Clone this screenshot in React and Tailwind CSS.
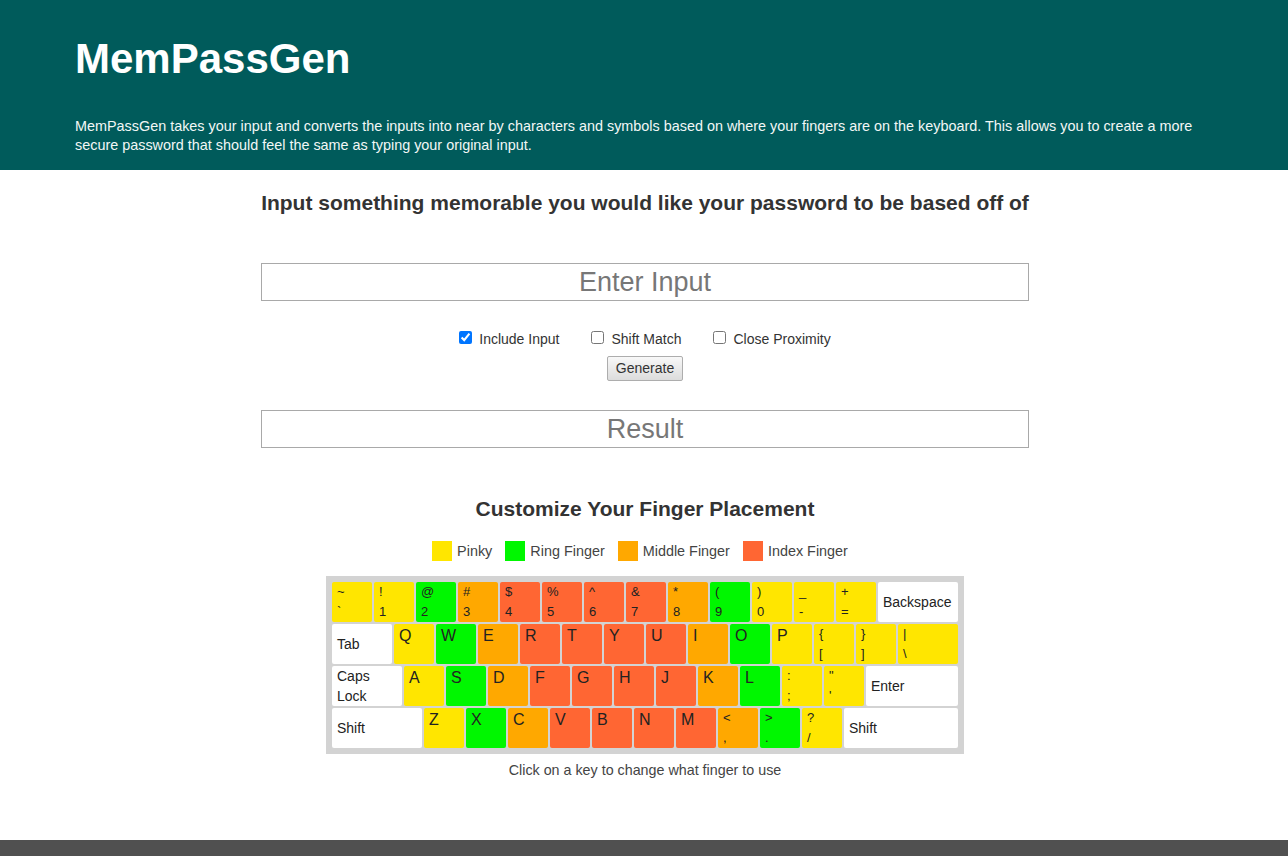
const Y = 'bg-[#ffe600]';
const G = 'bg-[#00f700]';
const O = 'bg-[#ffa800]';
const R = 'bg-[#ff6633]';
const W = 'bg-white';

const rows = [
  [
    { t: '~', b: '`', c: Y }, { t: '!', b: '1', c: Y }, { t: '@', b: '2', c: G }, { t: '#', b: '3', c: O },
    { t: '$', b: '4', c: R }, { t: '%', b: '5', c: R }, { t: '^', b: '6', c: R }, { t: '&', b: '7', c: R },
    { t: '*', b: '8', c: O }, { t: '(', b: '9', c: G }, { t: ')', b: '0', c: Y }, { t: '_', b: '-', c: Y },
    { t: '+', b: '=', c: Y }, { s: 'Backspace', w: 'w-[80px]', c: W },
  ],
  [
    { s: 'Tab', w: 'w-[60px]', c: W }, { l: 'Q', c: Y }, { l: 'W', c: G }, { l: 'E', c: O }, { l: 'R', c: R },
    { l: 'T', c: R }, { l: 'Y', c: R }, { l: 'U', c: R }, { l: 'I', c: O }, { l: 'O', c: G }, { l: 'P', c: Y },
    { t: '{', b: '[', c: Y }, { t: '}', b: ']', c: Y }, { t: '|', b: '\\', c: Y, w: 'w-[60px]' },
  ],
  [
    { s: 'Caps Lock', w: 'w-[70px]', c: W, two: true }, { l: 'A', c: Y }, { l: 'S', c: G }, { l: 'D', c: O },
    { l: 'F', c: R }, { l: 'G', c: R }, { l: 'H', c: R }, { l: 'J', c: R }, { l: 'K', c: O }, { l: 'L', c: G },
    { t: ':', b: ';', c: Y }, { t: '"', b: "'", c: Y }, { s: 'Enter', w: 'w-[92px]', c: W },
  ],
  [
    { s: 'Shift', w: 'w-[90px]', c: W }, { l: 'Z', c: Y }, { l: 'X', c: G }, { l: 'C', c: O }, { l: 'V', c: R },
    { l: 'B', c: R }, { l: 'N', c: R }, { l: 'M', c: R }, { t: '<', b: ',', c: O }, { t: '>', b: '.', c: G },
    { t: '?', b: '/', c: Y }, { s: 'Shift', w: 'w-[114px]', c: W },
  ],
];

function Key({ k }) {
  const width = k.w || 'w-[40px]';
  if (k.s) {
    return (
      <div className={`${width} ${k.c} h-[40px] m-px rounded-[2px] flex items-center px-[5px] text-[14px] leading-[20px] text-[#222]`}>
        {k.two ? <span>Caps<br />Lock</span> : k.s}
      </div>
    );
  }
  if (k.l) {
    return (
      <div className={`${width} ${k.c} h-[40px] m-px rounded-[2px] pl-[5px] pt-[2px] text-[16px] leading-[20px] text-[#222]`}>
        {k.l}
      </div>
    );
  }
  return (
    <div className={`${width} ${k.c} h-[40px] m-px rounded-[2px] pl-[5px] text-[13px] leading-[20px] text-[#222]`}>
      <div>{k.t}</div>
      <div>{k.b}</div>
    </div>
  );
}

function Legend({ color, label }) {
  return (
    <div className="flex items-center">
      <span className={`w-[20px] h-[20px] ${color} mr-[5px]`} />
      <span>{label}</span>
    </div>
  );
}

function Check({ label, checked }) {
  return (
    <label className="flex items-center">
      <input type="checkbox" defaultChecked={checked} className="w-[13px] h-[13px] mr-[7px] mb-[3px]" />
      <span>{label}</span>
    </label>
  );
}

export default function App() {
  return (
    <div className="min-h-screen bg-white flex flex-col" style={{ fontFamily: '"Liberation Sans", Arial, sans-serif' }}>
      <header className="bg-[#005b5b] text-white h-[170px]">
        <div className="max-w-[1140px] mx-auto pt-[36px] pl-px">
          <h1 className="text-[42px] leading-[46px] font-bold">MemPassGen</h1>
          <p className="mt-[35px] text-[14.4px] leading-[19px] text-[#f2f7f6]">
            MemPassGen takes your input and converts the inputs into near by characters and symbols based on where your fingers are on the keyboard. This allows you to create a more secure password that should feel the same as typing your original input.
          </p>
        </div>
      </header>

      <main className="w-[768px] mx-auto translate-x-[1px] flex flex-col items-center text-[#333]">
        <h2 className="mt-[22px] text-[21px] leading-[22px] font-bold">Input something memorable you would like your password to be based off of</h2>
        <input
          placeholder="Enter Input"
          className="mt-[49px] w-full h-[38px] border border-[#a9a9a9] text-center text-[27px] placeholder:text-[#777] outline-none"
        />
        <div className="mt-[28px] flex items-center gap-[32px] text-[14px] leading-[20px] text-[#333]">
          <Check label="Include Input" checked />
          <Check label="Shift Match" />
          <Check label="Close Proximity" />
        </div>
        <button className="mt-[7px] h-[25px] px-[8px] text-[14px] text-[#333] border border-[#adadad] rounded-[2px] bg-gradient-to-b from-[#f8f8f8] to-[#dcdcdc]">
          Generate
        </button>
        <input
          placeholder="Result"
          className="mt-[29px] w-full h-[38px] border border-[#a9a9a9] text-center text-[27px] placeholder:text-[#777] outline-none"
        />

        <h2 className="mt-[50px] text-[21px] leading-[22px] font-bold">Customize Your Finger Placement</h2>
        <div className="mt-[21px] pr-[10px] flex items-center gap-[13px] text-[14.4px] leading-[20px] text-[#444]">
          <Legend color={Y} label="Pinky" />
          <Legend color={G} label="Ring Finger" />
          <Legend color={O} label="Middle Finger" />
          <Legend color={R} label="Index Finger" />
        </div>

        <div className="mt-[15px] bg-[#d3d3d3] p-[5px]">
          {rows.map((row, i) => (
            <div key={i} className="flex">
              {row.map((k, j) => <Key key={j} k={k} />)}
            </div>
          ))}
        </div>
        <p className="mt-[6px] text-[14.3px] leading-[20px] text-[#444]">Click on a key to change what finger to use</p>
      </main>

      <footer className="mt-[60px] bg-[#505050] h-[60px]" />
    </div>
  );
}
